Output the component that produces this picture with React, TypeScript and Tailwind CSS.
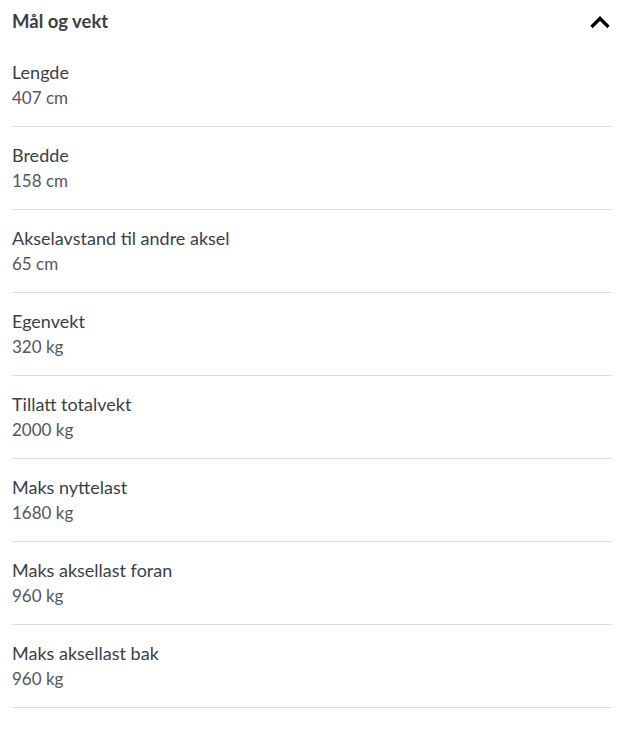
import React from 'react';

const rows = [
  { label: 'Lengde', value: '407 cm' },
  { label: 'Bredde', value: '158 cm' },
  { label: 'Akselavstand til andre aksel', value: '65 cm' },
  { label: 'Egenvekt', value: '320 kg' },
  { label: 'Tillatt totalvekt', value: '2000 kg' },
  { label: 'Maks nyttelast', value: '1680 kg' },
  { label: 'Maks aksellast foran', value: '960 kg' },
  { label: 'Maks aksellast bak', value: '960 kg' },
];

const App: React.FC = () => {
  return (
    <div className="min-h-screen bg-white pl-3 pr-[9px] font-['Lato',sans-serif]">
      <div className="flex h-11 items-center justify-between">
        <h2 className="text-[18.5px] font-bold text-[#3b3f45]">Mål og vekt</h2>
        <svg width="22" height="14" viewBox="0 0 22 14" className="mr-[1px]">
          <path d="M2.5 12 L11 3.5 L19.5 12" fill="none" stroke="#000" strokeWidth="3.4" />
        </svg>
      </div>
      <div>
        {rows.map((r) => (
          <div key={r.label} className="border-b border-[#dcdcdc] pt-[15px] pb-[15px] leading-[26px]">
            <div className="text-[18px] text-[#3b3f45]">{r.label}</div>
            <div className="text-[17px] text-[#53575e]">{r.value}</div>
          </div>
        ))}
      </div>
    </div>
  );
};

export default App;
